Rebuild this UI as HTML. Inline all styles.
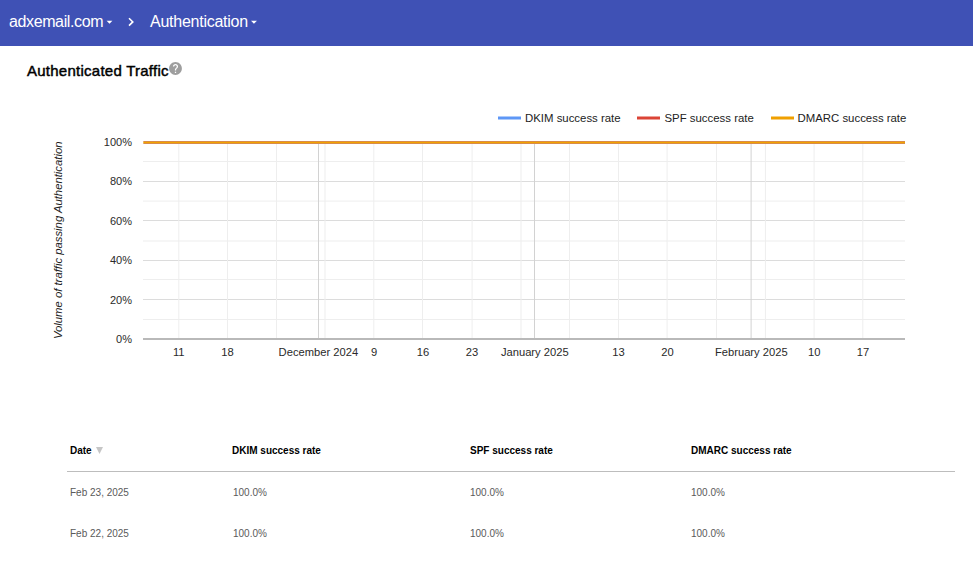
<!DOCTYPE html>
<html><head><meta charset="utf-8">
<style>
html,body{margin:0;padding:0;background:#fff;}
body{width:973px;height:562px;overflow:hidden;position:relative;font-family:"Liberation Sans",sans-serif;}
.hdr{position:absolute;left:0;top:0;width:973px;height:46px;background:#3f51b5;}
.ht{position:absolute;color:#fff;font-size:16px;letter-spacing:-0.25px;line-height:18px;white-space:nowrap;}
.title{position:absolute;left:27px;top:62px;font-size:15px;letter-spacing:0.25px;font-weight:normal;-webkit-text-stroke:0.45px #000;color:#000;line-height:18px;white-space:nowrap;}
.abs{position:absolute;white-space:nowrap;}
.th{position:absolute;top:445px;font-size:10px;font-weight:bold;color:#000;line-height:12px;white-space:nowrap;}
.td{position:absolute;font-size:10px;color:#5a5a5a;line-height:12px;white-space:nowrap;}
svg{position:absolute;left:0;top:0;}
</style></head>
<body>
<div class="hdr"></div>
<div class="ht" style="left:9px;top:13px;letter-spacing:-0.38px;">adxemail.com</div>
<svg width="973" height="562" style="pointer-events:none">
  <!-- header icons -->
  <path d="M106.6 20.7 L112.4 20.7 L109.5 23.8 Z" fill="#fff"/>
  <path d="M129 18.2 L132.8 21.9 L129 25.6" fill="none" stroke="#fff" stroke-width="1.6"/>
  <path d="M251 20.7 L256.9 20.7 L253.95 23.8 Z" fill="#fff"/>
  <!-- help icon -->
  <path transform="translate(167.82,60.82) scale(0.64)" fill="#9e9e9e" d="M12 2C6.48 2 2 6.48 2 12s4.48 10 10 10 10-4.48 10-10S17.520 2 12 2zm1 17h-2v-2h2v2zm2.07-7.750l-.9.92C13.45 12.9 13 13.5 13 15h-2v-.5c0-1.1.45-2.1 1.170-2.83l1.24-1.26c.37-.36.59-.86.59-1.41 0-1.1-.9-2-2-2s-2 .9-2 2H8c0-2.21 1.79-4 4-4s4 1.79 4 4c0 .88-.36 1.68-.93 2.25z"/>

  <!-- legend -->
  <rect x="498" y="116.5" width="23" height="3" fill="#5e97f6"/>
  <text x="525" y="122" font-family="Liberation Sans" font-size="11.4" fill="#222">DKIM success rate</text>
  <rect x="637" y="116.5" width="23" height="3" fill="#db4437"/>
  <text x="664.5" y="122" font-family="Liberation Sans" font-size="11.4" fill="#222">SPF success rate</text>
  <rect x="771" y="116.5" width="23" height="3" fill="#f0a000"/>
  <text x="797.5" y="122" font-family="Liberation Sans" font-size="11.4" fill="#222">DMARC success rate</text>

  <!-- horizontal minor gridlines -->
  <g fill="#eeeeee">
    <rect x="143" y="161" width="762" height="1"/>
    <rect x="143" y="200.6" width="762" height="1"/>
    <rect x="143" y="240.5" width="762" height="1"/>
    <rect x="143" y="279" width="762" height="1"/>
    <rect x="143" y="319" width="762" height="1"/>
  </g>
  <!-- horizontal major gridlines -->
  <g fill="#dcdcdc">
    <rect x="143" y="181" width="762" height="1"/>
    <rect x="143" y="220" width="762" height="1"/>
    <rect x="143" y="260" width="762" height="1"/>
    <rect x="143" y="299" width="762" height="1"/>
  </g>
  <!-- vertical week gridlines -->
  <g fill="#eeeeee">
    <rect x="178.3" y="142" width="1" height="197"/>
    <rect x="227.0" y="142" width="1" height="197"/>
    <rect x="276.0" y="142" width="1" height="197"/>
    <rect x="324.5" y="142" width="1" height="197"/>
    <rect x="373.3" y="142" width="1" height="197"/>
    <rect x="422.0" y="142" width="1" height="197"/>
    <rect x="471.6" y="142" width="1" height="197"/>
    <rect x="520.5" y="142" width="1" height="197"/>
    <rect x="569.0" y="142" width="1" height="197"/>
    <rect x="618.0" y="142" width="1" height="197"/>
    <rect x="666.6" y="142" width="1" height="197"/>
    <rect x="716.0" y="142" width="1" height="197"/>
    <rect x="764.9" y="142" width="1" height="197"/>
    <rect x="813.6" y="142" width="1" height="197"/>
    <rect x="862.3" y="142" width="1" height="197"/>
  </g>
  <!-- month gridlines -->
  <g fill="#d2d2d2">
    <rect x="318.0" y="142" width="1" height="197"/>
    <rect x="534.0" y="142" width="1" height="197"/>
    <rect x="750.6" y="142" width="1" height="197"/>
  </g>
  <!-- baseline -->
  <rect x="143" y="338" width="762" height="2" fill="#b9b9b9"/>
  <!-- data lines -->
  <rect x="143.3" y="141" width="761.7" height="1" fill="#d98c48"/>
  <rect x="143.3" y="142" width="761.7" height="1" fill="#f0a300"/>
  <rect x="143.3" y="143" width="761.7" height="1" fill="#d98c48"/>

  <!-- y labels -->
  <g font-family="Liberation Sans" font-size="11" fill="#2a2a2a" text-anchor="end">
    <text x="132" y="146.3">100%</text>
    <text x="132" y="184.6">80%</text>
    <text x="132" y="224.7">60%</text>
    <text x="132" y="263.9">40%</text>
    <text x="132" y="304">20%</text>
    <text x="132" y="343.2">0%</text>
  </g>
  <!-- x labels -->
  <g font-family="Liberation Sans" font-size="11.2" fill="#2a2a2a" text-anchor="middle">
    <text x="178.7" y="356">11</text>
    <text x="227.6" y="356">18</text>
    <text x="318.4" y="356">December 2024</text>
    <text x="374.2" y="356">9</text>
    <text x="423.1" y="356">16</text>
    <text x="472" y="356">23</text>
    <text x="534.8" y="356">January 2025</text>
    <text x="618.6" y="356">13</text>
    <text x="667.5" y="356">20</text>
    <text x="751.3" y="356">February 2025</text>
    <text x="814.2" y="356">10</text>
    <text x="863" y="356">17</text>
  </g>
  <!-- axis title -->
  <text transform="translate(62,240.3) rotate(-90)" font-family="Liberation Sans" font-size="11.3" font-style="italic" fill="#222" text-anchor="middle">Volume of traffic passing Authentication</text>

  <!-- table -->
  <rect x="67" y="471" width="888" height="1" fill="#bdbdbd"/>
  <path d="M96 447 L103 447 L99.5 454 Z" fill="#c6c6c6"/>
</svg>
<div class="ht" style="left:150px;top:13px;">Authentication</div>
<div class="title">Authenticated Traffic</div>

<div class="th" style="left:70px;">Date</div>
<div class="th" style="left:232px;">DKIM success rate</div>
<div class="th" style="left:470px;">SPF success rate</div>
<div class="th" style="left:691px;">DMARC success rate</div>

<div class="td" style="left:70px;top:487px;">Feb 23, 2025</div>
<div class="td" style="left:233px;top:487px;">100.0%</div>
<div class="td" style="left:470px;top:487px;">100.0%</div>
<div class="td" style="left:691px;top:487px;">100.0%</div>

<div class="td" style="left:70px;top:528px;">Feb 22, 2025</div>
<div class="td" style="left:233px;top:528px;">100.0%</div>
<div class="td" style="left:470px;top:528px;">100.0%</div>
<div class="td" style="left:691px;top:528px;">100.0%</div>
</body></html>
